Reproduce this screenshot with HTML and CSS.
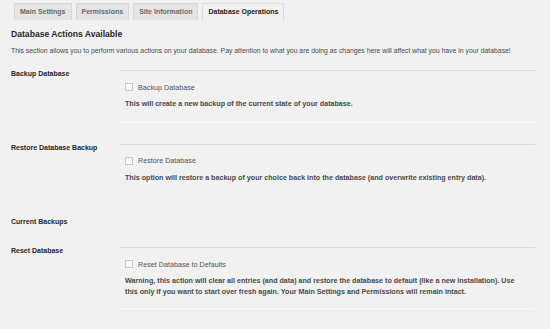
FILE: index.html
```html
<!DOCTYPE html>
<html>
<head>
<meta charset="utf-8">
<link rel="stylesheet" href="styles.css">
</head>
<body>
<div class="wrap">
  <nav class="tabs">
    <a class="tab">Main Settings</a>
    <a class="tab">Permissions</a>
    <a class="tab">Site Information</a>
    <a class="tab active">Database Operations</a>
  </nav>
  <h2 class="title">Database Actions Available</h2>
  <p class="intro">This section allows you to perform various actions on your database. Pay attention to what you are doing as changes here will affect what you have in your database!</p>

  <div class="row row-backup">
    <div class="label">Backup Database</div>
    <div class="field bottom">
      <label class="check"><input type="checkbox"><span>Backup Database</span></label>
      <p class="desc">This will create a new backup of the current state of your database.</p>
    </div>
  </div>

  <div class="row row-restore">
    <div class="label">Restore Database Backup</div>
    <div class="field">
      <label class="check"><input type="checkbox"><span>Restore Database</span></label>
      <p class="desc">This option will restore a backup of your choice back into the database (and overwrite existing entry data).</p>
    </div>
  </div>

  <div class="row row-current">
    <div class="label">Current Backups</div>
    <div></div>
  </div>

  <div class="row row-reset">
    <div class="label">Reset Database</div>
    <div class="field bottom">
      <label class="check"><input type="checkbox"><span>Reset Database to Defaults</span></label>
      <p class="desc">Warning, this action will clear all entries (and data) and restore the database to default (like a new installation). Use this only if you want to start over fresh again. Your Main Settings and Permissions will remain intact.</p>
    </div>
  </div>
</div>
</body>
</html>
```

FILE: styles.css
```css
html, body {
  margin: 0;
  padding: 0;
  background: #f1f1f1;
}
body {
  font-family: "Liberation Sans", Arial, sans-serif;
  color: #444;
  width: 550px;
  height: 329px;
  overflow: hidden;
}
.wrap {
  padding-left: 11px;
}
.tabs {
  display: flex;
  gap: 4px;
  padding-top: 3px;
  padding-left: 3px;
}
.tab {
  display: block;
  height: 16px;
  line-height: 16px;
  padding: 0 5px;
  font-size: 7px;
  font-weight: bold;
  color: #6a6a6a;
  background: #e5e5e5;
  border: 1px solid #d6d6d6;
  border-bottom: none;
  box-sizing: content-box;
}
.tab.active {
  background: #f1f1f1;
  color: #222;
  border-color: #dcdcdc;
  height: 17px;
}
.title {
  margin: 0;
  margin-top: 8px;
  font-size: 8.6px;
  line-height: 10px;
  font-weight: bold;
  color: #23282d;
}
.intro {
  margin: 7px 0 0 0;
  font-size: 6.85px;
  line-height: 10px;
  color: #4a4a4a;
}
.row {
  display: grid;
  grid-template-columns: 109px 415px;
}
.label {
  font-size: 7px;
  line-height: 8px;
  font-weight: bold;
  color: #23282d;
  padding-top: 0;
}
.field {
  border-top: 1px solid #dcdcdc;
  padding: 12px 0 0 5px;
}
.field.bottom {
  border-bottom: 1px solid #fbfbfb;
}
.check {
  display: flex;
  align-items: center;
  height: 8px;
  font-size: 7.2px;
  color: #555;
}
.check input {
  appearance: none;
  -webkit-appearance: none;
  margin: 0 5px 0 0;
  width: 8px;
  height: 8px;
  box-sizing: border-box;
  border: 1px solid #c8c8c8;
  background: #fbfbfb;
  border-radius: 0;
}
.desc {
  margin: 8px 0 0 0;
  padding-right: 12px;
  font-size: 7.15px;
  line-height: 10.5px;
  font-weight: bold;
  color: #4a4a4a;
}
.row-backup {
  margin-top: 14px;
}
.row-backup .field {
  padding-bottom: 12px;
}
.row-restore {
  margin-top: 21px;
}
.row-current {
  margin-top: 35px;
}
.row-reset {
  margin-top: 21px;
}
.row-reset .field {
  padding-bottom: 11px;
}
```
